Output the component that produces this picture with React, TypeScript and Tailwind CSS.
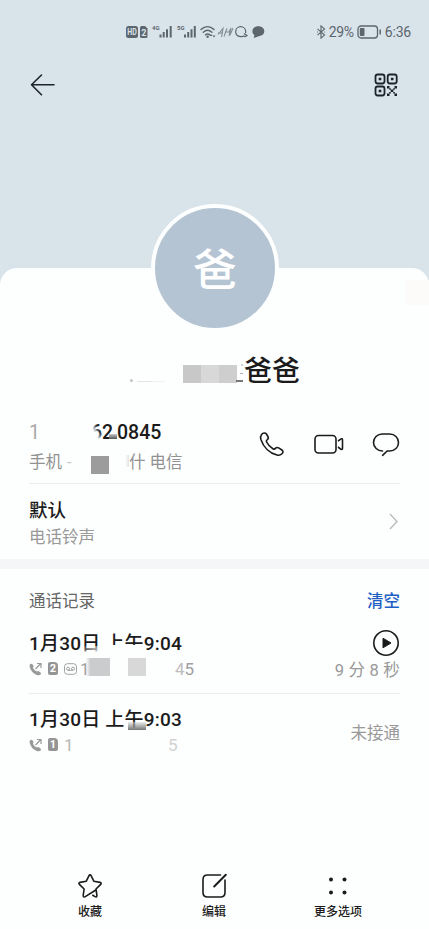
import type { ReactNode } from 'react';

export default function ContactDetail() {
  return (
    <div className="relative flex flex-col w-[429px] h-[929px] overflow-hidden bg-[#d9e3ea] text-[#1b1b1b] font-[Roboto,'Noto_Sans_CJK_SC',sans-serif]">
      <StatusBar />

      {/* Toolbar */}
      <div className="flex items-center justify-between h-[44px] pl-[30px] pr-[31px] shrink-0">
        <BackIcon />
        <QrIcon />
      </div>

      {/* Sheet */}
      <div className="relative flex flex-col flex-1 mt-[161px] rounded-t-[17px] bg-[#fdfefe]">
        <div className="absolute -top-[64px] left-[151px] w-[128px] h-[128px] pt-[5px] rounded-full border-4 border-[#fdfefe] bg-[#b5c4d3] flex items-center justify-center text-white text-[44px] leading-none font-medium">
          爸
        </div>
        <div className="absolute top-[12px] right-0 w-[23px] h-[25px] bg-[#fdfbfa]" />

        {/* Name */}
        <div className="flex items-center h-[42px] mt-[82px] pl-[130px] shrink-0">
          <div className="w-[53px] h-[26px] flex items-end pb-[2px]">
            <span className="w-[3px] h-[3px] rounded-full bg-[#c4c4c4]" />
            <span className="w-[14px] h-px ml-[4px] bg-[#e4e4e4]" />
            <span className="w-[14px] h-px bg-[#f2f2f2]" />
          </div>
          <div className="flex h-[18px] mt-[5px]">
            <span className="w-[18px] bg-[#c8c8c8]" />
            <span className="w-[18px] bg-[#d8d8d8]" />
            <span className="w-[18px] bg-[#cecece]" />
          </div>
          <div className="flex flex-col items-end w-[6px] h-[26px] justify-between pt-[6px] pb-[2px]">
            <span className="w-[2px] h-[2px] bg-[#d0d0d0]" />
            <span className="w-[3px] h-px bg-[#b0b0b0]" />
            <span className="w-[7px] h-[2px] bg-[#777]" />
          </div>
          <span className="ml-px pt-[2px] text-[28px] leading-[42px] font-medium">爸爸</span>
        </div>

        {/* Number */}
        <div className="flex justify-between h-[91px] pt-[27px] pl-[29px] pr-[29px] shrink-0">
          <div>
            <div className="flex h-[28px] text-[19.5px] leading-[28px] font-medium">
              <span className="w-[62px] font-normal text-[#a9a9a9]">1</span>
              <span className="relative w-[26px]">
                62
                <span className="absolute left-0 top-[6px] w-[10px] h-[18px] bg-linear-to-tr from-[#fdfefe] from-45% to-transparent to-80%" />
                <span className="absolute left-[18px] top-[15px] w-[8px] h-[5px] bg-linear-to-b from-[#ccc] to-[#555]" />
              </span>
              <span>0845</span>
            </div>
            <div className="flex h-[28px] text-[16.5px] leading-[31px] text-[#929292]">
              <span className="w-[38px]">手机</span>
              <span className="w-[24px] text-[#c8c8c8]">-</span>
              <span className="w-[18px] h-[18px] mt-[9px] bg-[#9c9c9c]" />
              <span className="w-[20px] h-[12px] mt-[8px] bg-linear-to-r from-transparent from-80% to-[#e4e4e4]" />
              <span>什 电信</span>
            </div>
          </div>
          <div className="flex mt-[12px] h-[28px]">
            <PhoneIcon />
            <VideoIcon />
            <MessageIcon />
          </div>
        </div>
        <Divider />

        {/* Ringtone */}
        <div className="flex items-center justify-between h-[75px] pl-[29px] pr-[31px] shrink-0">
          <div className="pt-[4px]">
            <div className="text-[18.5px] leading-[27px] font-medium">默认</div>
            <div className="text-[16.5px] leading-[25px] text-[#999]">电话铃声</div>
          </div>
          <svg width="9" height="17" viewBox="0 0 9 17" fill="none" stroke="#bdbdbd" strokeWidth={1.5}>
            <path d="M1 1l7 7.5-7 7.5" />
          </svg>
        </div>
        <div className="h-[10px] bg-[#f5f6f8] shrink-0" />

        {/* Call log */}
        <div className="flex items-center justify-between h-[62px] px-[29px] pt-[4px] text-[16.5px] shrink-0">
          <span className="text-[#666]">通话记录</span>
          <span className="font-medium text-[#1f60c4]">清空</span>
        </div>

        <div className="flex justify-between h-[62px] px-[29px] shrink-0">
          <div>
            <div className="relative h-[25px] text-[19px] leading-[25px] tracking-[0.2px] font-medium">
              1月30日 上午9:04
              <span className="absolute left-[52px] top-[15px] w-[18px] h-[9px] bg-linear-to-br from-transparent to-[#fdfefe]" />
              <span className="absolute left-[76px] top-[14px] w-[39px] h-[9px] bg-[#fdfefe]" />
            </div>
            <div className="flex items-center h-[26px] pt-[2px] text-[17px] text-[#a0a0a0]">
              <OutgoingIcon />
              <SimIcon n="2" />
              <VoicemailIcon />
              <span className="ml-[3px] w-[10px]">1</span>
              <span className="-ml-[4px] w-[5px] h-[18px] -mt-[7px] bg-linear-to-r from-[#eee]/20 to-[#c5c6c8]" />
              <span className="w-[19px] h-[18px] -mt-[7px] bg-[#cbccce]" />
              <span className="ml-[18px] w-[18px] h-[18px] -mt-[7px] bg-[#d8d8d9]" />
              <span className="ml-[29px] text-[#bdbdbd]">4</span>
              <span>5</span>
            </div>
          </div>
          <div className="flex flex-col items-end">
            <svg width="28" height="26" viewBox="0 0 28 26" fill="none" className="shrink-0 -mt-px">
              <circle cx="14" cy="13" r="12.2" stroke="#1b1b1b" strokeWidth={1.6} />
              <path d="M11 8.2v9.6l8-4.8z" fill="#1b1b1b" stroke="#1b1b1b" strokeLinejoin="round" />
            </svg>
            <span className="text-[16.5px] leading-[30px] tracking-[0.2px] text-[#999]">9 分 8 秒</span>
          </div>
        </div>
        <Divider />

        <div className="flex justify-between h-[64px] pt-[13px] px-[29px] shrink-0">
          <div>
            <div className="relative h-[25px] text-[19px] leading-[25px] tracking-[0.2px] font-medium">
              1月30日 上午9:03
              <span className="absolute left-[99px] top-[15px] w-[18px] h-[8px] bg-linear-to-b from-[#ddd]/50 to-[#777]" />
            </div>
            <div className="flex items-center h-[26px] pt-[2px] text-[17px] text-[#b8b8b8]">
              <OutgoingIcon />
              <SimIcon n="1" />
              <span className="ml-[6px] w-[104px]">1</span>
              <span className="text-[#d2d2d2]">5</span>
            </div>
          </div>
          <span className="text-[16.5px] leading-[53px] text-[#999]">未接通</span>
        </div>

        {/* Bottom actions */}
        <div className="flex mt-auto pb-[9px] pl-[28px] pr-[29px] text-[12px] leading-[16px] font-medium shrink-0">
          <Action label="收藏">
            <path d="M18.400 18.200L8.300 24.600c-1.300.8-2.300.2-2.100-1.200l.9-6.400-4.700-4.600c-.8-.8-.5-1.800.6-2l6.300-1.200 2.600-5.400c.6-1.200 1.700-1.200 2.300 0l2.600 5.400 6.300 1.200c1.100.2 1.400 1.200.6 2l-4.700 4.600.9 6.400c.2 1.400-.7 1.900-1.900 1.200l-2.200-1.300" />
          </Action>
          <Action label="编辑">
            <path d="M19.500 3H6.500C3.500 3 2 4.500 2 7.500v13c0 3 1.500 4.500 4.500 4.500h13c3 0 4.500-1.500 4.500-4.500V8" />
            <path d="M13.200 14.500L24.800 2.800" strokeWidth={2} />
          </Action>
          <Action label="更多选项">
            <g fill="#1b1b1b" stroke="none">
              <circle cx="6" cy="7.500" r="2" />
              <circle cx="19.500" cy="7.500" r="2" />
              <circle cx="6" cy="20.500" r="2" />
              <circle cx="19.500" cy="20.500" r="2" />
            </g>
          </Action>
        </div>
      </div>
    </div>
  );
}

function StatusBar() {
  return (
    <div className="flex items-center h-[63px] pl-[126px] pr-[18px] text-[#5d666f] shrink-0">
      <svg width="140" height="20" viewBox="0 0 140 20" fill="currentColor" className="font-[Roboto,sans-serif] font-bold">
        <rect x="0" y="4" width="12" height="12" rx="2.500" />
        <text x="1.200" y="13.200" fontSize="8.500" fill="#d9e3ea" textLength="9.500" lengthAdjust="spacingAndGlyphs">HD</text>
        <path d="M15.500 4h3.500l2.500 2.500V14.500a1.500 1.500 0 0 1-1.500 1.500h-4.500a1.500 1.500 0 0 1-1.500-1.500v-9a1.500 1.500 0 0 1 1.500-1.500z" />
        <text x="15.300" y="13.500" fontSize="9" fill="#d9e3ea">2</text>
        <text x="26" y="7.500" fontSize="6">4G</text>
        <path d="M33.500 12.500h2v3h-2zM36.700 10h2v5.500h-2zM40 7.200h2v8.300h-2zM43.700 4h2v11.500h-2z" />
        <text x="51" y="7.500" fontSize="6">5G</text>
        <path d="M58 12.500h2v3h-2zM61.200 10h2v5.500h-2zM64.500 7.200h2v8.300h-2zM67.800 4h2v11.500h-2z" />
        <g fill="none" stroke="currentColor" strokeWidth={1.500} strokeLinecap="round">
          <path d="M75 7.500c4-3.600 9-3.600 13 0M77.300 10.200c2.600-2.300 6-2.300 8.600 0M79.500 12.800c1.300-1 2.900-1 4.200 0" />
        </g>
        <circle cx="81.600" cy="14.800" r="1.200" />
        <path d="M85 12l1.500 2h-3zM88 15.500l-1.500-2h3z" />
        <g fill="none" stroke="currentColor" strokeWidth={1.100} opacity="0.700">
          <path d="M92 12.500l5-6-1.500 8.500M92 11h5M98 14.500l3-8M99 10h4l2-4-2 8M104 13l3-7" />
        </g>
        <path d="M118.500 13.800c-1.300.7-2.600 1-4 .8-3-.3-4.800-2.300-4.800-4.900 0-2.800 2.100-5 5-5s5 2.200 5 5c0 .5-.1 1-.2 1.400M118 11.500l3 2-2.500 1.500" fill="none" stroke="currentColor" strokeWidth={1.200} />
        <path d="M132.300 4.200c3.700 0 6 2.200 6 5s-2.600 4.900-5.600 5l-5 1.800.7-3c-1.300-.9-2-2.200-2-3.800 0-2.800 2.300-5 5.900-5z" />
      </svg>

      <svg width="10" height="14" viewBox="0 0 10 16" fill="none" stroke="currentColor" strokeWidth={1.300} className="ml-auto">
        <path d="M1 4.500l8 7-4 3.500V1l4 3.500-8 7" />
        <path d="M.5 8h1M8.500 8h1" />
      </svg>
      <span className="ml-[3px] w-[27px] text-[14px] leading-5 tracking-[-0.4px]">29%</span>
      <svg width="25" height="14" viewBox="0 0 25 14" fill="none" className="ml-px">
        <rect x="1" y="1" width="19.500" height="12" rx="3" stroke="currentColor" strokeWidth={1.300} />
        <rect x="2.800" y="3" width="4.700" height="8" rx="1" fill="currentColor" />
        <path d="M23.200 4.500v5" stroke="currentColor" strokeWidth={1.500} />
      </svg>
      <span className="ml-[3px] text-[14px] leading-5 tracking-[-0.2px]">6:36</span>
    </div>
  );
}

function Divider() {
  return <div className="h-px mx-[29px] bg-[#ececee] shrink-0" />;
}

function Action({ label, children }: { label: string; children: ReactNode }) {
  return (
    <div className="flex flex-col items-center flex-1">
      <svg width="26" height="28" viewBox="0 0 26 28" fill="none" stroke="#1b1b1b" strokeWidth={1.6} strokeLinecap="round" strokeLinejoin="round">
        {children}
      </svg>
      <span className="mt-[4px]">{label}</span>
    </div>
  );
}

function BackIcon() {
  return (
    <svg width="25" height="24" viewBox="0 0 25 24" fill="none" stroke="#1c232b" strokeWidth={1.6} strokeLinecap="round" strokeLinejoin="round">
      <path d="M11.500 2L1.500 11.800l10 10M1.500 11.800H24" />
    </svg>
  );
}

function QrIcon() {
  return (
    <svg width="24" height="24" viewBox="0 0 24 24" fill="none">
      <g stroke="#1c232b" strokeWidth={1.8}>
        <rect x="1.500" y="1.500" width="9" height="9" rx="2.200" />
        <rect x="13.700" y="1.500" width="9" height="9" rx="2.200" />
        <rect x="1.500" y="13.500" width="9" height="9" rx="2.200" />
      </g>
      <path
        d="M4.700 4.700h2.600v2.600H4.700zM16.900 4.700h2.600v2.600h-2.600zM4.700 16.700h2.600v2.600H4.700zM13 13h2.500v2.500H13zM20.500 13H23v2.500h-2.500zM16.700 16.500h2.600v2.600h-2.600zM13 20.500h2.500V23H13zM20.500 20.500H23V23h-2.500zM15.200 15.200h1.600v1.600h-1.600zM19.200 15.200h1.600v1.600h-1.600zM15.200 19h1.600v1.600h-1.600zM19.200 19h1.600v1.600h-1.600z"
        fill="#1c232b"
      />
    </svg>
  );
}

function PhoneIcon() {
  return (
    <svg width="26" height="26" viewBox="0 0 26 26" fill="none" stroke="#1b1b1b" strokeWidth={1.6} strokeLinejoin="round">
      <path d="M2.600 3.500C4 1.700 6.300 1.500 7.400 3l1.500 2.500c.8 1.400.5 2.500-.8 3.300-.9.600-1 1.300-.5 2.200 1.300 2.700 3.500 5 6.300 6.700 1 .6 1.800.5 2.500-.3 1-1.100 2-1.200 3.200-.5l3.300 2.100c1.200.8 1.400 2 .6 3.100-1.300 1.900-3.200 2.500-5.500 1.900C10.500 22.200 4.400 16 1.900 8.500 1.300 6.500 1.500 4.900 2.600 3.500z" />
    </svg>
  );
}

function VideoIcon() {
  return (
    <svg width="30" height="26" viewBox="0 0 30 26" fill="none" stroke="#1b1b1b" strokeWidth={1.600} strokeLinejoin="round" className="ml-[29px]">
      <rect x="1" y="4.500" width="21" height="17.500" rx="3.500" />
      <path d="M24 10.200l3-2.300c.8-.4 1.500-.1 1.500.8v8.800c0 .9-.7 1.200-1.500.8l-3-2.300" />
    </svg>
  );
}

function MessageIcon() {
  return (
    <svg width="28" height="26" viewBox="0 0 28 26" fill="none" stroke="#1b1b1b" strokeWidth={1.600} strokeLinecap="round" className="ml-[28px]">
      <path d="M10.500 20C5.500 19.900 1.500 16.300 1.500 11.500S5.300 3 10.300 3h7.400c5 0 8.800 3.700 8.800 8.500S22.700 20 17.700 20h-2.500l-4.600 4.300" />
    </svg>
  );
}

function OutgoingIcon() {
  return (
    <svg width="13" height="14" viewBox="0 0 13 14" fill="none" className="mr-[6px] -mt-[3px]">
      <path d="M1 2.500C1.700 1.500 3 1.500 3.600 2.500l.8 1.300c.3.7.1 1.200-.5 1.700.7 1.800 2.100 3.200 4 4.100.6-.6 1.200-.7 1.800-.3l1.700 1.100c.8.6.8 1.500.1 2.200-1 .9-2.400.9-4.100.2C4 11.300 1.600 8.500.8 5.300.5 4.200.5 3.200 1 2.500z" fill="#999" />
      <path d="M6.500 7l4.800-5M8 1.500h4V6" stroke="#999" strokeWidth={1.200} />
    </svg>
  );
}

function SimIcon({ n }: { n: string }) {
  return (
    <span className="flex items-center justify-center w-[10px] h-[13px] -mt-[3px] rounded-[2px] rounded-tr-[4px] bg-[#959595] text-white text-[11px] leading-none font-bold">
      {n}
    </span>
  );
}

function VoicemailIcon() {
  return (
    <svg width="13" height="12" viewBox="0 0 13 12" fill="none" stroke="#a0a0a0" strokeWidth={1} className="ml-[6px] -mt-[3px]">
      <rect x="0.500" y="0.700" width="12" height="10.600" rx="3" />
      <circle cx="4" cy="5.700" r="1.500" />
      <circle cx="9" cy="5.700" r="1.500" />
      <path d="M4 7.300h5" />
    </svg>
  );
}
